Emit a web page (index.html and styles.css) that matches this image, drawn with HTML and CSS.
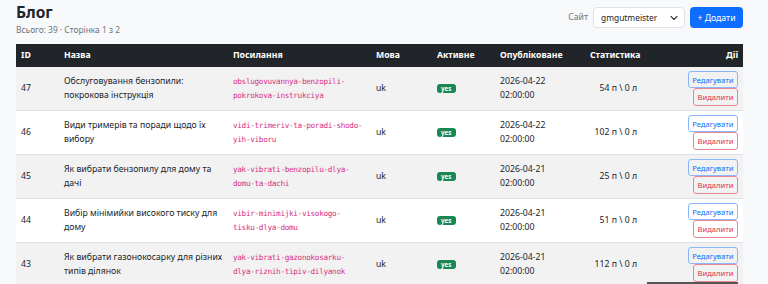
FILE: index.html
```html
<!DOCTYPE html>
<html lang="uk">
<head>
<meta charset="utf-8">
<title>Блог</title>
<link rel="stylesheet" href="styles.css">
</head>
<body>
<div class="page">
  <div class="topbar">
    <div class="titles">
      <h1 class="title">Блог</h1>
      <div class="subtitle">Всього: 39 · Сторінка 1 з 2</div>
    </div>
    <div class="controls">
      <span class="site-label">Сайт</span>
      <div class="select">
        <span>gmgutmeister</span>
        <svg class="chev" width="8" height="6" viewBox="0 0 8 6"><path d="M1 1.5 L4 4.5 L7 1.5" fill="none" stroke="#343a40" stroke-width="1.1" stroke-linecap="round" stroke-linejoin="round"/></svg>
      </div>
      <button class="btn-add">+ Додати</button>
    </div>
  </div>

  <table class="grid">
    <colgroup>
      <col class="c-id"><col class="c-name"><col class="c-slug"><col class="c-lang"><col class="c-act"><col class="c-pub"><col class="c-stat"><col class="c-actions">
    </colgroup>
    <thead>
      <tr>
        <th>ID</th><th>Назва</th><th>Посилання</th><th>Мова</th><th>Активне</th><th>Опубліковане</th><th>Статистика</th><th class="end">Дії</th>
      </tr>
    </thead>
    <tbody>
      <tr>
        <td>47</td>
        <td>Обслуговування бензопили: покрокова інструкція</td>
        <td><code>obslugovuvannya-benzopili-pokrokova-instrukciya</code></td>
        <td>uk</td>
        <td><span class="badge">yes</span></td>
        <td>2026-04-22<br>02:00:00</td>
        <td class="stat">54 п \ 0 л</td>
        <td><div class="actions"><button class="btn edit">Редагувати</button><button class="btn del">Видалити</button></div></td>
      </tr>
      <tr>
        <td>46</td>
        <td>Види тримерів та поради щодо їх вибору</td>
        <td><code>vidi-trimeriv-ta-poradi-shodo-yih-viboru</code></td>
        <td>uk</td>
        <td><span class="badge">yes</span></td>
        <td>2026-04-22<br>02:00:00</td>
        <td class="stat">102 п \ 0 л</td>
        <td><div class="actions"><button class="btn edit">Редагувати</button><button class="btn del">Видалити</button></div></td>
      </tr>
      <tr>
        <td>45</td>
        <td>Як вибрати бензопилу для дому та дачі</td>
        <td><code>yak-vibrati-benzopilu-dlya-domu-ta-dachi</code></td>
        <td>uk</td>
        <td><span class="badge">yes</span></td>
        <td>2026-04-21<br>02:00:00</td>
        <td class="stat">25 п \ 0 л</td>
        <td><div class="actions"><button class="btn edit">Редагувати</button><button class="btn del">Видалити</button></div></td>
      </tr>
      <tr>
        <td>44</td>
        <td>Вибір мінімийки високого тиску для дому</td>
        <td><code>vibir-minimijki-visokogo-tisku-dlya-domu</code></td>
        <td>uk</td>
        <td><span class="badge">yes</span></td>
        <td>2026-04-21<br>02:00:00</td>
        <td class="stat">51 п \ 0 л</td>
        <td><div class="actions"><button class="btn edit">Редагувати</button><button class="btn del">Видалити</button></div></td>
      </tr>
      <tr>
        <td>43</td>
        <td>Як вибрати газонокосарку для різних типів ділянок</td>
        <td><code>yak-vibrati-gazonokosarku-dlya-riznih-tipiv-dilyanok</code></td>
        <td>uk</td>
        <td><span class="badge">yes</span></td>
        <td>2026-04-21<br>02:00:00</td>
        <td class="stat">112 п \ 0 л</td>
        <td><div class="actions"><button class="btn edit">Редагувати</button><button class="btn del">Видалити</button></div></td>
      </tr>
    </tbody>
  </table>
</div>
<div class="toast-edge"></div>
</body>
</html>
```

FILE: styles.css
```css
* { box-sizing: border-box; }
html, body { margin: 0; padding: 0; }
body {
  background: #f8f9fa;
  font-family: "Noto Sans", "Open Sans", sans-serif;
  color: #212529;
  font-size: 8.7px;
  line-height: 13.5px;
  overflow: hidden;
}
.page {
  width: 727px;
  margin-left: 16px;
  padding-top: 2px;
}
.topbar {
  display: flex;
  justify-content: space-between;
  align-items: flex-start;
  height: 42px;
}
.title {
  margin: 0;
  font-size: 15.5px;
  line-height: 21px;
  font-weight: 700;
}
.subtitle {
  color: #6c757d;
  font-size: 8.4px;
  line-height: 12px;
  margin-top: 1px;
}
.controls {
  display: flex;
  align-items: center;
  gap: 5px;
  margin-top: 5px;
}
.site-label {
  color: #6c757d;
  font-size: 8.7px;
}
.select {
  width: 92px;
  height: 21px;
  background: #fff;
  border: 1px solid #dee2e6;
  border-radius: 4px;
  display: flex;
  align-items: center;
  justify-content: space-between;
  padding: 0 6px 0 7px;
  font-size: 8.4px;
}
.chev { display: block; }
.btn-add {
  height: 21px;
  width: 53px;
  background: #0d6efd;
  color: #fff;
  border: 0;
  border-radius: 4px;
  font-family: inherit;
  font-size: 8.7px;
  padding: 0;
}
.grid {
  width: 727px;
  border-collapse: collapse;
  table-layout: fixed;
}
.c-id { width: 43px; }
.c-name { width: 169px; }
.c-slug { width: 143px; }
.c-lang { width: 61px; }
.c-act { width: 63px; }
.c-pub { width: 90px; }
.c-stat { width: 57px; }
.c-actions { width: 101px; }
.grid th {
  background: #212529;
  color: #fff;
  font-weight: 700;
  text-align: left;
  height: 23px;
  padding: 0 5px;
  font-size: 8.7px;
}
.grid th.end { text-align: right; }
.grid td {
  padding: 4px 5px;
  vertical-align: middle;
  border-bottom: 1px solid #dee2e6;
}
.grid tbody tr:nth-child(odd) td { background: #f2f2f2; }
.grid tbody tr:nth-child(even) td { background: #fff; }
.grid .stat { text-align: right; }
.actions {
  display: flex;
  flex-direction: column;
  align-items: flex-end;
  height: 35px;
}
code {
  font-family: "DejaVu Sans Mono", "Liberation Mono", monospace;
  font-size: 7.7px;
  letter-spacing: -0.32px;
  color: #d63384;
  line-height: 13.5px;
}
.badge {
  display: inline-block;
  background: #198754;
  color: #fff;
  font-weight: 700;
  font-size: 6.3px;
  line-height: 9px;
  padding: 0 4px;
  border-radius: 3px;
  vertical-align: middle;
}
.btn {
  display: block;
  font-family: inherit;
  font-size: 7.6px;
  line-height: 10px;
  background: transparent;
  border: 1px solid;
  border-radius: 3px;
  padding: 3px 3.5px;
  margin: 0;
  height: 17px;
}
.btn.edit { color: #0d6efd; border-color: #86b7fe; }
.btn.del { color: #dc3545; border-color: #ea868f; height: 18px; }
.toast-edge {
  position: fixed;
  left: 647px;
  top: 282px;
  width: 91px;
  height: 10px;
  background: #555;
}
```
